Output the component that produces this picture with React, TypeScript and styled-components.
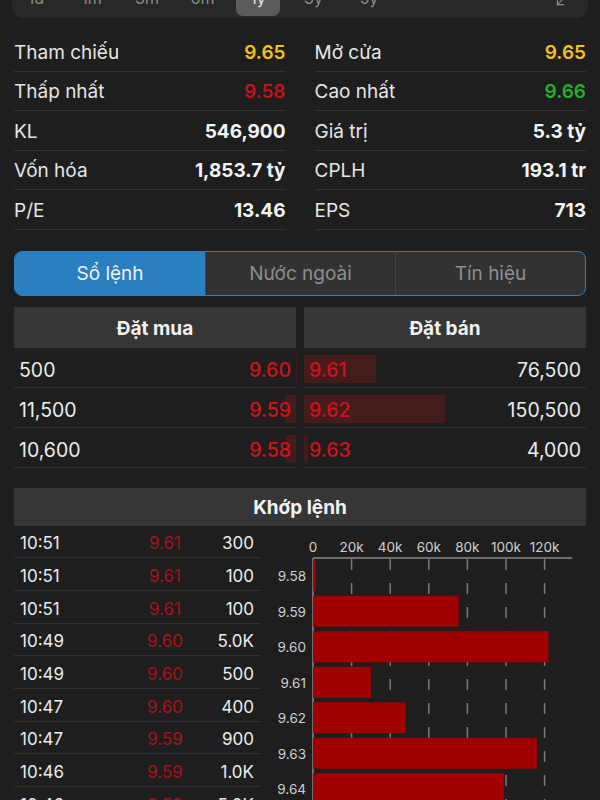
import styled, { createGlobalStyle } from "styled-components";
import { ArrowDownLeft } from "lucide-react";

const GlobalStyle = createGlobalStyle`
  body {
    margin: 0;
    background: #1e1e1e;
    font-family: Inter, "Liberation Sans", sans-serif;
    color: #ececec;
  }
`;

const Page = styled.div`
  padding: 0 14px;
`;

const RangeBar = styled.div`
  margin: -22px -2px 0;
  height: 40px;
  padding: 0 2px;
  display: flex;
  align-items: center;
  gap: 11.5px;
  background: #282828;
  border-radius: 0 0 10px 10px;
`;

const RangeItem = styled.div<{ $active?: boolean }>`
  width: 44px;
  height: 36px;
  display: flex;
  align-items: center;
  justify-content: center;
  border-radius: 7px;
  font-size: 16px;
  color: ${(p) => (p.$active ? "#e6e6e6" : "#8c8c8c")};
  background: ${(p) => (p.$active ? "#5b5b5b" : "transparent")};
`;

const RangeIcon = styled.div`
  margin: 6px 18px 0 auto;
  color: #8c8c8c;
  display: flex;
`;

const StatsGrid = styled.div`
  margin-top: 14px;
  display: grid;
  grid-template-columns: 1fr 1fr;
  column-gap: 29px;
`;

const StatRow = styled.div`
  height: 37px;
  padding-top: 1.5px;
  display: flex;
  align-items: center;
  justify-content: space-between;
  border-bottom: 1px solid #323232;
  font-size: 19px;
`;

const StatLabel = styled.span`
  color: #e6e6e6;
`;

const StatValue = styled.span<{ $color?: string }>`
  font-weight: ${(p) => (p.$color ? 600 : 700)};
  color: ${(p) => p.$color || "#f4f4f4"};
`;

const Tabs = styled.div`
  margin-top: 21px;
  height: 43px;
  display: grid;
  grid-template-columns: 1fr 1fr 1fr;
  border: 1.5px solid #2e80c0;
  border-radius: 8px;
  overflow: hidden;
  background: #323232;
`;

const Tab = styled.div<{ $active?: boolean }>`
  display: flex;
  align-items: center;
  justify-content: center;
  padding-top: 1px;
  font-size: 19px;
  color: ${(p) => (p.$active ? "#f2f2f2" : "#8e8e8e")};
  background: ${(p) => (p.$active ? "#2a7fc1" : "transparent")};
  & + & {
    border-left: 1px solid #454545;
  }
`;

const BookGrid = styled.div`
  margin-top: 11px;
  display: grid;
  grid-template-columns: 1fr 1fr;
  column-gap: 8px;
`;

const SectionHeader = styled.div<{ $height: number }>`
  height: ${(p) => p.$height}px;
  display: flex;
  align-items: center;
  justify-content: center;
  padding-top: 2px;
  box-sizing: border-box;
  background: #363636;
  font-size: 19px;
  font-weight: 700;
  color: #f2f2f2;
`;

const BookRow = styled.div`
  position: relative;
  height: 34px;
  padding: 5px 5px 0;
  display: flex;
  align-items: center;
  justify-content: space-between;
  border-bottom: 1px solid #313131;
  font-size: 19.5px;
`;

const DepthBar = styled.div<{ $side: "buy" | "sell" }>`
  position: absolute;
  top: 7px;
  bottom: 4px;
  ${(p) => (p.$side === "buy" ? "right: 0;" : "left: 0;")}
  background: rgba(170, 25, 25, 0.28);
`;

const Qty = styled.span`
  position: relative;
  color: #ececec;
`;

const BookPrice = styled.span`
  position: relative;
  font-weight: 500;
  color: #d3101c;
`;

const MatchHeader = styled(SectionHeader)`
  margin-top: 20px;
`;

const MatchBody = styled.div`
  display: grid;
  grid-template-columns: 246px 316px;
  column-gap: 10px;
`;

const TradeRow = styled.div`
  height: 27.7px;
  padding: 4px 6px 0;
  display: grid;
  grid-template-columns: 110px 70px 1fr;
  align-items: center;
  border-bottom: 1px solid #313131;
  font-size: 17px;
`;

const TradeTime = styled.span`
  color: #ececec;
`;

const TradePrice = styled.span`
  text-align: center;
  color: #a5141c;
`;

const TradeVol = styled.span`
  text-align: right;
  color: #ececec;
`;

const ChartSvg = styled.svg`
  display: block;
  font-family: Inter, "Liberation Sans", sans-serif;
`;

const ranges = ["1d", "1m", "3m", "6m", "1y", "3y", "5y"];

const stats: [string, string, string?][][] = [
  [
    ["Tham chiếu", "9.65", "#f0c31a"],
    ["Thấp nhất", "9.58", "#c4121b"],
    ["KL", "546,900"],
    ["Vốn hóa", "1,853.7 tỷ"],
    ["P/E", "13.46"],
  ],
  [
    ["Mở cửa", "9.65", "#f0c31a"],
    ["Cao nhất", "9.66", "#22b12a"],
    ["Giá trị", "5.3 tỷ"],
    ["CPLH", "193.1 tr"],
    ["EPS", "713"],
  ],
];

const bids = [
  { qty: "500", price: "9.60", vol: 500 },
  { qty: "11,500", price: "9.59", vol: 11500 },
  { qty: "10,600", price: "9.58", vol: 10600 },
];

const asks = [
  { qty: "76,500", price: "9.61", vol: 76500 },
  { qty: "150,500", price: "9.62", vol: 150500 },
  { qty: "4,000", price: "9.63", vol: 4000 },
];

const trades = [
  ["10:51", "9.61", "300"],
  ["10:51", "9.61", "100"],
  ["10:51", "9.61", "100"],
  ["10:49", "9.60", "5.0K"],
  ["10:49", "9.60", "500"],
  ["10:47", "9.60", "400"],
  ["10:47", "9.59", "900"],
  ["10:46", "9.59", "1.0K"],
  ["10:46", "9.59", "5.0K"],
];

const volumeByPrice: [string, number][] = [
  ["9.58", 1.5],
  ["9.59", 75.5],
  ["9.60", 122],
  ["9.61", 30],
  ["9.62", 48],
  ["9.63", 116],
  ["9.64", 99],
  ["9.65", 60],
];

const depthScale = 0.94 / 1000;

const x0 = 43;
const perK = 38.6 / 20;
const axisY = 32;
const band = 35.5;

function VolumeChart() {
  const ticks = [0, 20, 40, 60, 80, 100, 120];
  return (
    <ChartSvg width={316} height={300}>
      {ticks.map((t) => (
        <text
          key={t}
          x={x0 + t * perK}
          y={26}
          fill="#cfcfcf"
          fontSize={13.5}
          textAnchor="middle"
        >
          {t === 0 ? "0" : `${t}k`}
        </text>
      ))}
      <line x1={x0} y1={axisY} x2={302} y2={axisY} stroke="#8a8a8a" strokeWidth={1.5} />
      <line x1={x0} y1={axisY} x2={x0} y2={300} stroke="#8a8a8a" strokeWidth={1.5} />
      {ticks.slice(1).map((t) => (
        <line
          key={t}
          x1={x0 + t * perK}
          y1={axisY + 1}
          x2={x0 + t * perK}
          y2={300}
          stroke="#7a7a7a"
          strokeWidth={1.5}
          strokeDasharray="11 13"
        />
      ))}
      {volumeByPrice.map(([price, v], i) => {
        const top = axisY + i * band + 2.25;
        return (
          <g key={price}>
            <rect x={x0} y={top} width={v * perK} height={31} fill="#a00000" />
            <text
              x={36}
              y={top + 21}
              fill="#cfcfcf"
              fontSize={13.5}
              textAnchor="end"
            >
              {price}
            </text>
          </g>
        );
      })}
    </ChartSvg>
  );
}

export default function App() {
  return (
    <Page>
      <GlobalStyle />
      <RangeBar>
        {ranges.map((r) => (
          <RangeItem key={r} $active={r === "1y"}>
            {r}
          </RangeItem>
        ))}
        <RangeIcon>
          <ArrowDownLeft size={15} strokeWidth={1.8} />
        </RangeIcon>
      </RangeBar>

      <StatsGrid>
        {stats.map((col, ci) => (
          <div key={ci}>
            {col.map(([label, value, color]) => (
              <StatRow key={label}>
                <StatLabel>{label}</StatLabel>
                <StatValue $color={color}>{value}</StatValue>
              </StatRow>
            ))}
          </div>
        ))}
      </StatsGrid>

      <Tabs>
        <Tab $active>Sổ lệnh</Tab>
        <Tab>Nước ngoài</Tab>
        <Tab>Tín hiệu</Tab>
      </Tabs>

      <BookGrid>
        <div>
          <SectionHeader $height={41}>Đặt mua</SectionHeader>
          {bids.map((b) => (
            <BookRow key={b.price}>
              <DepthBar $side="buy" style={{ width: b.vol * depthScale }} />
              <Qty>{b.qty}</Qty>
              <BookPrice>{b.price}</BookPrice>
            </BookRow>
          ))}
        </div>
        <div>
          <SectionHeader $height={41}>Đặt bán</SectionHeader>
          {asks.map((a) => (
            <BookRow key={a.price}>
              <DepthBar $side="sell" style={{ width: a.vol * depthScale }} />
              <BookPrice>{a.price}</BookPrice>
              <Qty>{a.qty}</Qty>
            </BookRow>
          ))}
        </div>
      </BookGrid>

      <MatchHeader $height={38}>Khớp lệnh</MatchHeader>
      <MatchBody>
        <div>
          {trades.map(([time, price, vol], i) => (
            <TradeRow key={i}>
              <TradeTime>{time}</TradeTime>
              <TradePrice>{price}</TradePrice>
              <TradeVol>{vol}</TradeVol>
            </TradeRow>
          ))}
        </div>
        <VolumeChart />
      </MatchBody>
    </Page>
  );
}
